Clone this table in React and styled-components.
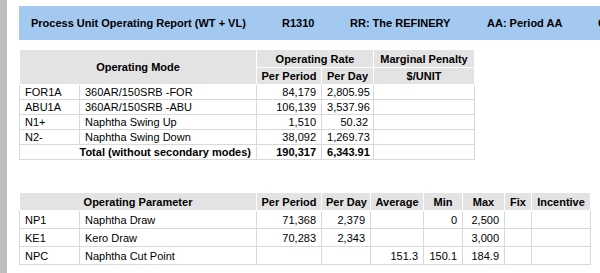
import React from "react"
import styled, { createGlobalStyle } from "styled-components"

const GlobalStyle = createGlobalStyle`
  html, body {
    margin: 0;
    padding: 0;
    background: #ffffff;
    overflow: hidden;
  }
  body {
    font-family: "Liberation Sans", Arial, sans-serif;
    font-size: 11px;
    color: #000000;
  }
`

const Page = styled.div`
  display: flex;
  width: 600px;
  height: 273px;
  overflow: hidden;
`

const SideStrip = styled.div`
  flex: 0 0 7px;
  background: #bdbdbd;
`

const Content = styled.div`
  flex: 1;
  padding: 6px 0 0 12px;
  min-width: 0;
`

const TitleBar = styled.div`
  display: grid;
  grid-template-columns: 251px 68px 137px 111px 40px;
  align-items: center;
  height: 34px;
  padding-left: 12px;
  background: #a4c9f0;
  font-weight: 700;
  font-size: 11px;
  white-space: nowrap;
  overflow: hidden;
`

const Table = styled.table`
  border-collapse: collapse;
  table-layout: fixed;
  margin-top: ${p => p.$top}px;
  width: ${p => p.$width}px;
`

const Th = styled.th`
  background: #e3e3e3;
  border: 1px solid #ffffff;
  font-weight: 700;
  text-align: center;
  padding: 0 4px;
  height: ${p => p.$h || 16}px;
  white-space: nowrap;
`

const Td = styled.td`
  border: 1px solid #d9d9d9;
  padding: 0 5px;
  height: ${p => p.$h || 14}px;
  text-align: ${p => (p.$num ? "right" : "left")};
  font-weight: ${p => (p.$bold ? 700 : 400)};
  white-space: nowrap;
`

const modeCols = [60, 177, 65, 52, 101]
const paramCols = [60, 177, 65, 49, 53, 39, 42, 27, 59]

const modes = [
  ["FOR1A", "360AR/150SRB -FOR", "84,179", "2,805.95"],
  ["ABU1A", "360AR/150SRB -ABU", "106,139", "3,537.96"],
  ["N1+", "Naphtha Swing Up", "1,510", "50.32"],
  ["N2-", "Naphtha Swing Down", "38,092", "1,269.73"],
]

const params = [
  ["NP1", "Naphtha Draw", "71,368", "2,379", "", "0", "2,500"],
  ["KE1", "Kero Draw", "70,283", "2,343", "", "", "3,000"],
  ["NPC", "Naphtha Cut Point", "", "", "151.3", "150.1", "184.9"],
]

const Cols = ({ widths }) => (
  <colgroup>
    {widths.map((w, i) => <col key={i} style={{ width: w }} />)}
  </colgroup>
)

const ModeTable = () => (
  <Table $top={9} $width={455}>
    <Cols widths={modeCols} />
    <thead>
      <tr>
        <Th colSpan={2} rowSpan={2}>Operating Mode</Th>
        <Th colSpan={2} $h={17}>Operating Rate</Th>
        <Th $h={17}>Marginal Penalty</Th>
      </tr>
      <tr>
        <Th>Per Period</Th>
        <Th>Per Day</Th>
        <Th>$/UNIT</Th>
      </tr>
    </thead>
    <tbody>
      {modes.map(([code, name, period, day]) => (
        <tr key={code}>
          <Td>{code}</Td>
          <Td>{name}</Td>
          <Td $num>{period}</Td>
          <Td $num>{day}</Td>
          <Td />
        </tr>
      ))}
      <tr>
        <Td colSpan={2} $num $bold>Total (without secondary modes)</Td>
        <Td $num $bold>190,317</Td>
        <Td $num $bold>6,343.91</Td>
        <Td />
      </tr>
    </tbody>
  </Table>
)

const ParamTable = () => (
  <Table $top={32} $width={571}>
    <Cols widths={paramCols} />
    <thead>
      <tr>
        <Th colSpan={2} $h={17}>Operating Parameter</Th>
        <Th>Per Period</Th>
        <Th>Per Day</Th>
        <Th>Average</Th>
        <Th>Min</Th>
        <Th>Max</Th>
        <Th>Fix</Th>
        <Th>Incentive</Th>
      </tr>
    </thead>
    <tbody>
      {params.map(([code, name, ...vals]) => (
        <tr key={code}>
          <Td $h={17}>{code}</Td>
          <Td $h={17}>{name}</Td>
          {vals.map((v, i) => <Td key={i} $h={17} $num>{v}</Td>)}
          <Td $h={17} />
          <Td $h={17} />
        </tr>
      ))}
    </tbody>
  </Table>
)

const App = () => (
  <>
    <GlobalStyle />
    <Page>
      <SideStrip />
      <Content>
        <TitleBar>
          <span>Process Unit Operating Report (WT + VL)</span>
          <span>R1310</span>
          <span>RR: The REFINERY</span>
          <span>AA: Period AA</span>
          <span>C</span>
        </TitleBar>
        <ModeTable />
        <ParamTable />
      </Content>
    </Page>
  </>
)

export default App
